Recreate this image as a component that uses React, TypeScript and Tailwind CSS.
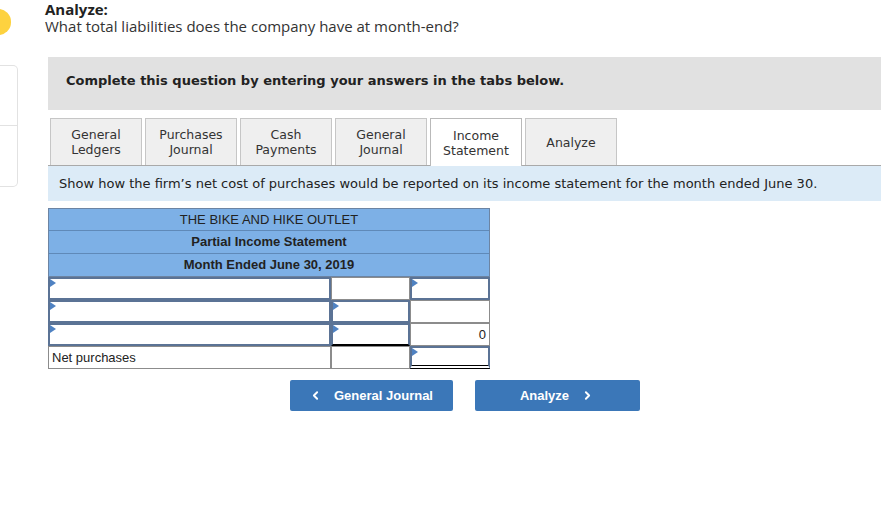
import React from 'react';
import { ChevronLeft, ChevronRight } from 'lucide-react';

const tabs = [
  { label: ['General', 'Ledgers'] },
  { label: ['Purchases', 'Journal'] },
  { label: ['Cash', 'Payments'] },
  { label: ['General', 'Journal'] },
  { label: ['Income', 'Statement'], active: true },
  { label: ['Analyze'] },
];

function Marker() {
  return (
    <span className="absolute left-0 top-0 h-0 w-0 border-y-[4px] border-l-[6px] border-y-transparent border-l-[#4f82c2]" />
  );
}

type CellProps = {
  input?: boolean;
  marker?: boolean;
  className?: string;
  children?: React.ReactNode;
};

function Cell({ input, marker, className = '', children }: CellProps) {
  return (
    <div
      className={
        'relative flex h-[23px] items-center px-[3px] ' +
        (input ? 'border-2 border-[#5b7395] ' : 'border border-[#8c8c8c] ') +
        className
      }
    >
      {marker && <Marker />}
      {children}
    </div>
  );
}

export default function App() {
  return (
    <div className="flex h-[519px] w-[881px] overflow-hidden bg-white text-[#333]">
      <div className="flex w-[45px] shrink-0 flex-col">
        <div className="-ml-[14px] mt-[9px] h-[26px] w-[25px] rounded-full bg-[#fdd23f]" />
        <div className="mt-[30px] flex h-[122px] w-[18px] flex-col rounded-r-[5px] border border-l-0 border-[#e2e2e2]">
          <div className="h-[60px] border-b border-[#e2e2e2]" />
        </div>
      </div>

      <div className="flex min-w-0 flex-1 flex-col">
        <div className="pt-px font-['Open_Sans',sans-serif] text-[15px] leading-[17px]">
          <p className="font-bold text-[#222]">Analyze:</p>
          <p className="text-[#333]">What total liabilities does the company have at month-end?</p>
        </div>

        <div className="ml-[3px] font-['DejaVu_Sans',Verdana,sans-serif]">
          <div className="mt-[22px] flex h-[53px] items-start bg-[#e1e1e1] pl-[18px] pt-[14px] text-[13px] font-bold text-[#222]">
            Complete this question by entering your answers in the tabs below.
          </div>

          <div className="mt-[8px] flex h-[48px] items-end gap-[3px] border-b border-[#a9a9a9] pl-[2px]">
            {tabs.map((t) => (
              <div
                key={t.label.join(' ')}
                className={
                  'flex w-[92px] flex-col items-center justify-center text-[12.5px] leading-[15px] text-[#333] ' +
                  (t.active
                    ? 'relative -mb-px h-[48px] border border-b-0 border-[#b9b9b9] bg-white'
                    : 'h-[47px] border border-b-0 border-[#c6c6c6] bg-[#efefef]')
                }
              >
                {t.label.map((l) => (
                  <span key={l}>{l}</span>
                ))}
              </div>
            ))}
          </div>

          <div className="flex h-[35px] items-center bg-[#dcebf7] pl-[11px] text-[13px] text-[#222]">
            Show how the firm’s net cost of purchases would be reported on its income statement for the month ended June 30.
          </div>

          <div className="mt-[7px] w-[442px] font-['Liberation_Sans',Arial,sans-serif] text-[13px] text-[#222]">
            <div className="border border-[#6c84a3] bg-[#7db0e6]">
              <div className="flex h-[22px] items-center justify-center border-b border-[#5f89b8]">THE BIKE AND HIKE OUTLET</div>
              <div className="flex h-[23px] items-center justify-center border-b border-[#5f89b8] font-bold">Partial Income Statement</div>
              <div className="flex h-[22px] items-center justify-center font-bold">Month Ended June 30, 2019</div>
            </div>
            <div className="grid grid-cols-[283px_79px_80px]">
              <Cell input marker />
              <Cell />
              <Cell input marker />

              <Cell input marker />
              <Cell input marker />
              <Cell />

              <Cell input marker />
              <Cell input marker className="border-b-black" />
              <Cell className="justify-end">0</Cell>

              <Cell>Net purchases</Cell>
              <Cell />
              <Cell input marker className="border-b-[4px] border-double border-b-black" />
            </div>
          </div>

          <div className="mt-[11px] flex w-[833px] justify-center gap-[22px] font-['Liberation_Sans',Arial,sans-serif] text-[13px] font-bold text-white">
            <button type="button" className="flex h-[31px] w-[163px] items-center justify-center gap-[12px] rounded-[2px] bg-[#3b77b8]">
              <ChevronLeft size={13} strokeWidth={3.5} />
              General Journal
            </button>
            <button type="button" className="flex h-[31px] w-[165px] items-center justify-center gap-[12px] rounded-[2px] bg-[#3b77b8]">
              Analyze
              <ChevronRight size={13} strokeWidth={3.5} />
            </button>
          </div>
        </div>
      </div>
    </div>
  );
}
